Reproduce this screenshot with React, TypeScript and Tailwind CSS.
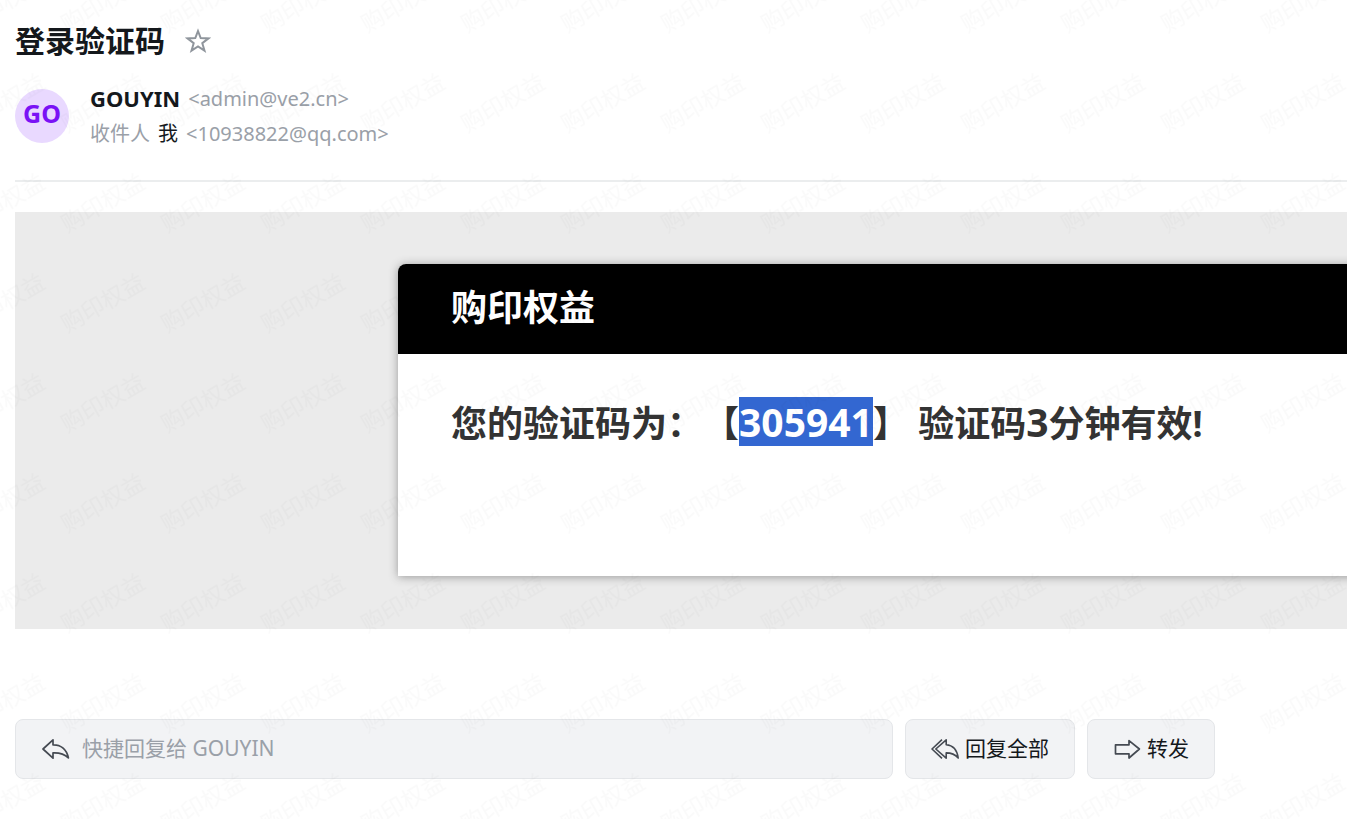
import React, { useState } from 'react';

const FONT = "font-['Noto_Sans','Noto_Sans_CJK_SC',sans-serif]";

const StarIcon = () => (
  <svg className="w-[26px] h-[26px]" viewBox="0 0 26 26" fill="none" stroke="#8f959c" strokeWidth="2" strokeLinejoin="miter">
    <path d="M13 3 L15.7 10.1 L23.4 10.4 L17.3 15.2 L19.5 22.7 L13 18.4 L6.5 22.7 L8.7 15.2 L2.6 10.4 L10.3 10.1 Z" />
  </svg>
);

const ReplyIcon = () => (
  <svg className="w-7 h-6 shrink-0" viewBox="0 0 28 24" fill="none" stroke="#454a52" strokeWidth="1.7" strokeLinejoin="round">
    <path d="M1 12 L11 2.8 V7.8 C18.5 7.6 24.6 12 26.4 21 C22 16.6 17 15.6 11 15.9 V21.2 Z" />
  </svg>
);

const ReplyAllIcon = () => (
  <svg className="w-7 h-6 shrink-0" viewBox="0 0 28 24" fill="none" stroke="#454a52" strokeWidth="1.6" strokeLinejoin="round">
    <path d="M11 2.6 L1 12 L11 21.4" />
    <path d="M4.8 12 L15.2 2.8 V7.8 C21.5 8.2 26 12.4 27.2 21 C23.6 16.8 20 15.9 15.2 15.9 V21.2 Z" />
  </svg>
);

const ForwardIcon = () => (
  <svg className="w-7 h-6 shrink-0" viewBox="0 0 28 24" fill="none" stroke="#454a52" strokeWidth="1.7" strokeLinejoin="round">
    <path d="M2.5 7.8 H16 V3.6 L26.4 12 L16 21 V16.8 H2.5 Z" />
  </svg>
);

// Tiled brand text laid over the whole mail
const Watermark = () => (
  <svg className="absolute inset-0 w-full h-full pointer-events-none select-none" aria-hidden="true">
    <defs>
      <pattern id="brand" x="-47" y="-47" width="100" height="100" patternUnits="userSpaceOnUse">
        <text
          x="50"
          y="58"
          textAnchor="middle"
          fontSize="23"
          fill="#000"
          fillOpacity="0.02"
          transform="rotate(-30 50 50)"
        >
          购印权益
        </text>
      </pattern>
    </defs>
    <rect width="100%" height="100%" fill="url(#brand)" />
  </svg>
);

const MailHeader = () => (
  <header className="border-b-2 border-[#ebedee] pb-[29px]">
    <div className="flex items-center gap-5">
      <h1 className="text-[30px] leading-[42px] font-bold text-[#14181c]">登录验证码</h1>
      <button type="button" aria-label="星标">
        <StarIcon />
      </button>
    </div>
    <div className="flex items-center gap-[21px] mt-[19px]">
      <div className="w-[54px] h-[54px] pb-1 rounded-full bg-[#e9d9ff] text-[#7a12f5] text-[25px] font-bold flex items-center justify-center">
        GO
      </div>
      <div className="text-xl leading-[35px] text-[#9aa0a8]">
        <p className="flex gap-2">
          <span className="font-bold text-[22px] text-[#14181c]">GOUYIN</span>
          <span>&lt;admin@ve2.cn&gt;</span>
        </p>
        <p className="flex gap-2">
          <span>收件人</span>
          <span className="text-[#14181c]">我</span>
          <span>&lt;10938822@qq.com&gt;</span>
        </p>
      </div>
    </div>
  </header>
);

const MailBody = () => (
  <main className="mt-[30px] bg-[#ebebeb] pt-[52px] pb-[53px] pl-[383px]">
    <article className="-mr-4 bg-white rounded-tl-lg shadow-[0_1px_10px_#999]">
      <h2 className="h-[90px] pl-[53px] bg-black rounded-tl-lg text-white text-4xl leading-[88px] font-bold">购印权益</h2>
      <div className="h-[222px] pt-[43px] pl-[53px] text-[#333] text-4xl leading-[49px] font-bold whitespace-nowrap [text-spacing-trim:space-all]">
        您的验证码为：【
        <span className="inline-block bg-[#3367d1] text-white text-[39px]">305941</span>】 验证码
        <span className="text-[39px]">3</span>分钟有效!
      </div>
    </article>
  </main>
);

const QuickReply = () => {
  const [reply, setReply] = useState('');

  return (
    <footer className="flex gap-3 max-w-[1200px] mt-[90px] text-[21px]">
      <label className="flex flex-1 items-center gap-3 h-[60px] px-[26px] bg-[#f2f3f5] border border-[#e4e6e9] rounded-lg">
        <ReplyIcon />
        <input
          type="text"
          aria-label="快捷回复"
          className="flex-1 bg-transparent outline-none placeholder-[#9aa0a8]"
          placeholder="快捷回复给 GOUYIN"
          value={reply}
          onChange={(e) => setReply(e.target.value)}
        />
      </label>
      <button type="button" className="flex items-center gap-1.5 h-[60px] px-[25px] bg-[#f2f3f5] border border-[#e4e6e9] rounded-lg text-[#14181c]">
        <ReplyAllIcon />
        回复全部
      </button>
      <button type="button" className="flex items-center gap-1.5 h-[60px] px-[25px] bg-[#f2f3f5] border border-[#e4e6e9] rounded-lg text-[#14181c]">
        <ForwardIcon />
        转发
      </button>
    </footer>
  );
};

export default function App() {
  return (
    <div className={`relative min-h-screen overflow-hidden bg-white pl-[15px] pt-5 pb-10 ${FONT}`}>
      <MailHeader />
      <MailBody />
      <QuickReply />
      <Watermark />
    </div>
  );
}
